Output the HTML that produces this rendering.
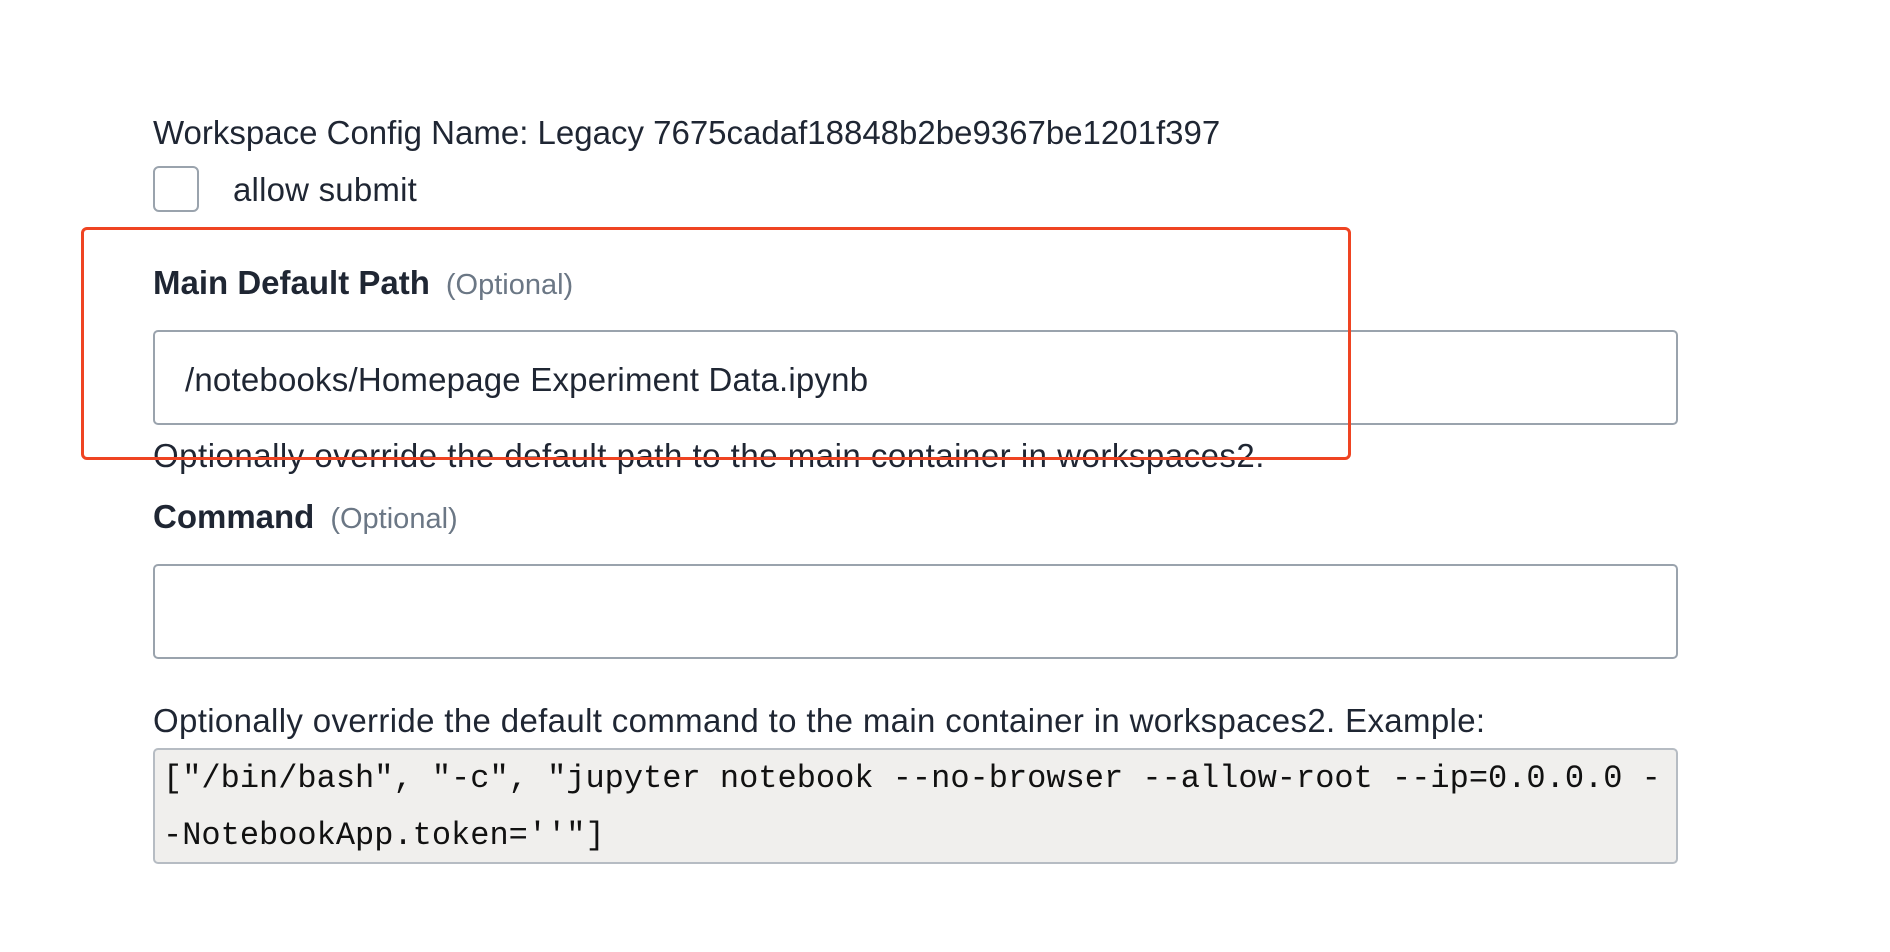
<!DOCTYPE html>
<html><head><style>
body{margin:0;width:1890px;height:952px;background:#fff;font-family:"Liberation Sans",sans-serif;color:#1f2633;position:relative;overflow:hidden}
.a{position:absolute;white-space:nowrap}
.t{font-size:33px;letter-spacing:0.2px}
.lbl{font-size:33px;font-weight:bold}
.opt{font-size:29px;font-weight:normal;color:#6b7785;margin-left:16px}
.inp{position:absolute;left:153px;width:1534px;border:2px solid #9aa3ad;border-radius:5px;background:#fff;box-sizing:border-box}
.code{position:absolute;left:153px;top:748px;width:1534px;height:116px;background:#f0efed;border:2px solid #b6bcc3;border-radius:5px;box-sizing:border-box;font-family:"Liberation Mono",monospace;font-size:32px;line-height:57px;padding:0 0 0 8px;color:#111;white-space:pre}
</style></head><body>
<div class="a t" style="left:153px;top:114px;letter-spacing:0">Workspace Config Name: Legacy 7675cadaf18848b2be9367be1201f397</div>
<div class="a" style="left:153px;top:166px;width:46px;height:46px;border:2px solid #9aa3ad;border-radius:6px;box-sizing:border-box"></div>
<div class="a t" style="left:233px;top:171px">allow submit</div>
<div class="a lbl" style="left:153px;top:264px">Main Default Path<span class="opt">(Optional)</span></div>
<div class="inp" style="top:330px;height:95px;width:1525px"></div>
<div class="a t" style="left:185px;top:361px">/notebooks/Homepage Experiment Data.ipynb</div>
<div class="a t" style="left:153px;top:437px;letter-spacing:0.5px">Optionally override the default path to the main container in workspaces2.</div>
<div class="a lbl" style="left:153px;top:498px">Command<span class="opt">(Optional)</span></div>
<div class="inp" style="top:564px;height:95px;width:1525px"></div>
<div class="a t" style="left:153px;top:702px;letter-spacing:0.35px">Optionally override the default command to the main container in workspaces2. Example:</div>
<div class="code" style="width:1525px">["/bin/bash", "-c", "jupyter notebook --no-browser --allow-root --ip=0.0.0.0 -
-NotebookApp.token=''"]</div>
<div class="a" style="left:81px;top:227px;width:1276px;height:233px;border:3px solid #ef4422;border-radius:6px;box-sizing:border-box;width:1270px"></div>
</body></html>
